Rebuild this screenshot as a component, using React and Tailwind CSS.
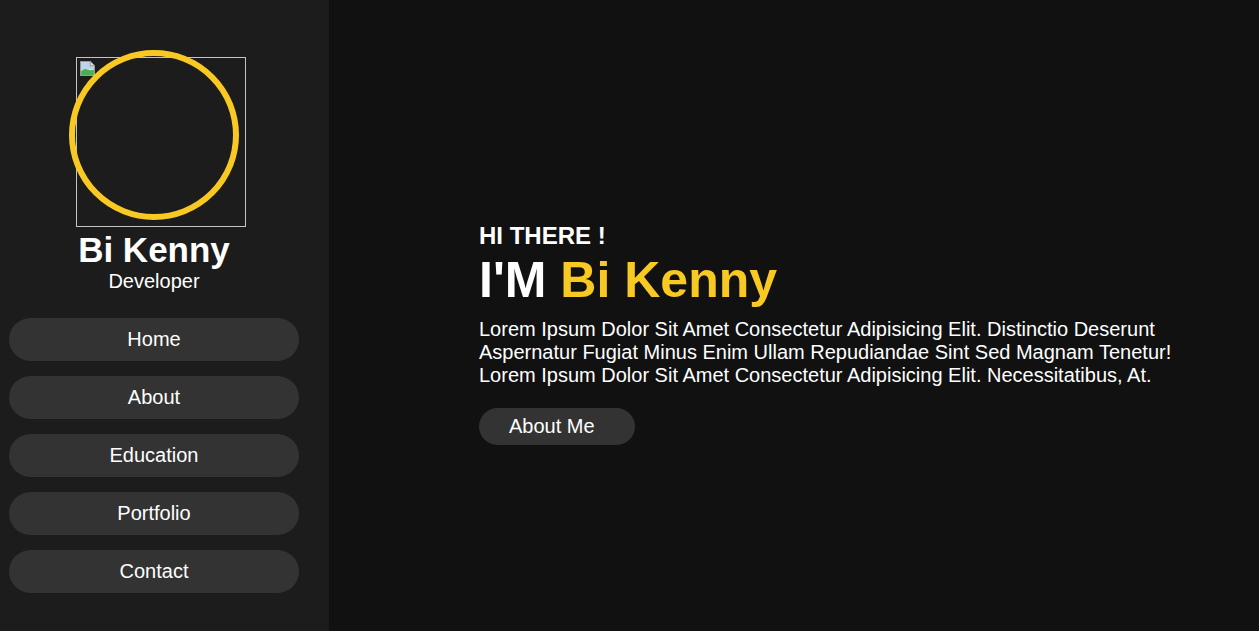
import React from 'react';

const links = ['Home', 'About', 'Education', 'Portfolio', 'Contact'];

// the little "image failed to load" glyph the browser shows
const BrokenImage = () => (
  <svg width="17" height="17" viewBox="0 0 16 16" className="absolute left-[2px] top-[2px]">
    <path d="M1.5 1.5h9l4 4v9h-13z" fill="#f2f2f2" stroke="#9a9a9a" />
    <path d="M2 2h8v4h4v3H2z" fill="#b8d4ee" />
    <path d="M2 14V10.5c2-2 4-2.5 6-1.5s4 1 6 0V14z" fill="#4caf50" />
    <path d="M10.5 1.5v4h4" fill="#dcdcdc" stroke="#9a9a9a" />
  </svg>
);

const Sidebar = () => (
  <aside className="w-[329px] shrink-0 bg-[#1c1c1c] pt-[50px]">
    <div className="ml-[9px] w-[290px] flex flex-col items-center">
      <div className="relative w-[170px] h-[170px]">
        <div className="absolute left-[7px] top-[7px] w-[170px] h-[170px] border border-[#c4c4c4]">
          <BrokenImage />
        </div>
        <div className="absolute inset-0 rounded-full border-[6px] border-[#f9c923]" />
      </div>
      <h2 className="mt-[10px] text-[35px] font-bold leading-[40px] text-white">Bi Kenny</h2>
      <p className="text-[20px] leading-[23px] text-white">Developer</p>
      <nav className="mt-[25px] w-full flex flex-col gap-[15px]">
        {links.map((l) => (
          <a
            key={l}
            href="#"
            className="block w-full rounded-full bg-[#333333] py-[10px] text-center text-[20px] leading-[23px] text-white"
          >
            {l}
          </a>
        ))}
      </nav>
    </div>
  </aside>
);

const Hero = () => (
  <main className="flex-1 bg-[#111111] flex flex-col justify-center pt-[36px] pl-[150px] pr-[50px]">
    <h3 className="text-[24px] font-bold leading-[28px] text-white">HI THERE !</h3>
    <h1 className="mt-[2px] text-[50px] font-bold leading-[57px] text-white">
      I'M <span className="text-[#f9c923]">Bi Kenny</span>
    </h1>
    <p className="mt-[9px] text-[20px] leading-[23px] text-white">
      Lorem Ipsum Dolor Sit Amet Consectetur Adipisicing Elit. Distinctio Deserunt Aspernatur Fugiat Minus Enim
      Ullam Repudiandae Sint Sed Magnam Tenetur! Lorem Ipsum Dolor Sit Amet Consectetur Adipisicing Elit.
      Necessitatibus, At.
    </p>
    <div className="mt-[21px]">
      <a href="#" className="inline-block w-[156px] rounded-full bg-[#333333] py-[7px] pl-[30px] text-[20px] leading-[23px] text-white">
        About Me
      </a>
    </div>
  </main>
);

export default function App() {
  return (
    <div className="flex h-[631px] w-full overflow-hidden font-['Liberation_Sans',Arial,sans-serif]">
      <Sidebar />
      <Hero />
    </div>
  );
}
